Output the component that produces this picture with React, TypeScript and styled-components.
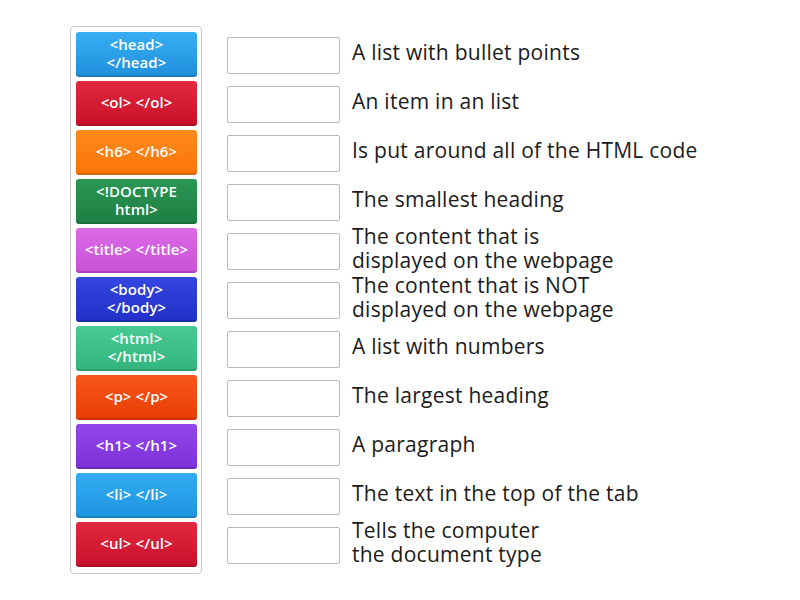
import React from "react";
import styled, { createGlobalStyle } from "styled-components";

const Global = createGlobalStyle`
  html, body { margin: 0; padding: 0; background: #ffffff; }
  body { font-family: "Open Sans", Lato, sans-serif; }
`;

const Page = styled.div`
  display: flex;
  align-items: flex-start;
  padding: 26px 0 0 70px;
  gap: 25px;
`;

const TileBox = styled.div`
  display: flex;
  flex-direction: column;
  gap: 4px;
  padding: 5px 4px 6px 5px;
  border: 1px solid #c9c9c9;
  border-radius: 4px;
  width: 121px;
`;

const Tile = styled.div<{ $c: string; $d: string }>`
  height: 45px;
  border-radius: 3px;
  background: linear-gradient(to bottom, ${(p) => p.$c}, ${(p) => p.$d});
  box-shadow: inset 0 -2px 0 rgba(0, 0, 0, 0.14);
  color: #ffffff;
  font-family: "Open Sans", sans-serif;
  font-weight: 600;
  font-size: 15px;
  letter-spacing: 0.1px;
  line-height: 17.5px;
  white-space: pre-line;
  display: flex;
  align-items: center;
  justify-content: center;
  text-align: center;
  padding-bottom: 2px;
  box-sizing: border-box;
`;

const Rows = styled.div`
  display: flex;
  flex-direction: column;
  gap: 4px;
  padding-top: 6px;
`;

const Row = styled.div`
  height: 45px;
  display: flex;
  align-items: center;
  gap: 12px;
`;

const Slot = styled.div`
  width: 113px;
  height: 37px;
  box-sizing: border-box;
  border: 1px solid #b9b9b9;
  border-radius: 2px;
  background: #fff;
  flex: none;
  margin-top: 1px;
`;

const Label = styled.div`
  font-family: "Open Sans", sans-serif;
  font-size: 21px;
  letter-spacing: 0.25px;
  line-height: 24.5px;
  color: #1b1b1b;
  white-space: pre-line;
  margin-top: -5px;
`;

const tiles: [string, string, string][] = [
  ["<head>\n</head>", "#37aef4", "#1f8fdc"],
  ["<ol> </ol>", "#e12840", "#c8102a"],
  ["<h6> </h6>", "#ff8a1c", "#fb7406"],
  ["<!DOCTYPE\nhtml>", "#2a9655", "#1e7f43"],
  ["<title> </title>", "#dc6ae6", "#c752d4"],
  ["<body>\n</body>", "#3446e0", "#2130c6"],
  ["<html>\n</html>", "#48cb93", "#32b57c"],
  ["<p> </p>", "#f8561a", "#e63e04"],
  ["<h1> </h1>", "#9346ea", "#7d30d8"],
  ["<li> </li>", "#31acf2", "#1e95e0"],
  ["<ul> </ul>", "#e12840", "#c8102a"],
];

const labels = [
  "A list with bullet points",
  "An item in an list",
  "Is put around all of the HTML code",
  "The smallest heading",
  "The content that is\ndisplayed on the webpage",
  "The content that is NOT\ndisplayed on the webpage",
  "A list with numbers",
  "The largest heading",
  "A paragraph",
  "The text in the top of the tab",
  "Tells the computer\nthe document type",
];

export default function App() {
  return (
    <>
      <Global />
      <Page>
        <TileBox>
          {tiles.map(([t, c, d]) => (
            <Tile key={t} $c={c} $d={d}>
              {t}
            </Tile>
          ))}
        </TileBox>
        <Rows>
          {labels.map((l) => (
            <Row key={l}>
              <Slot />
              <Label>{l}</Label>
            </Row>
          ))}
        </Rows>
      </Page>
    </>
  );
}
